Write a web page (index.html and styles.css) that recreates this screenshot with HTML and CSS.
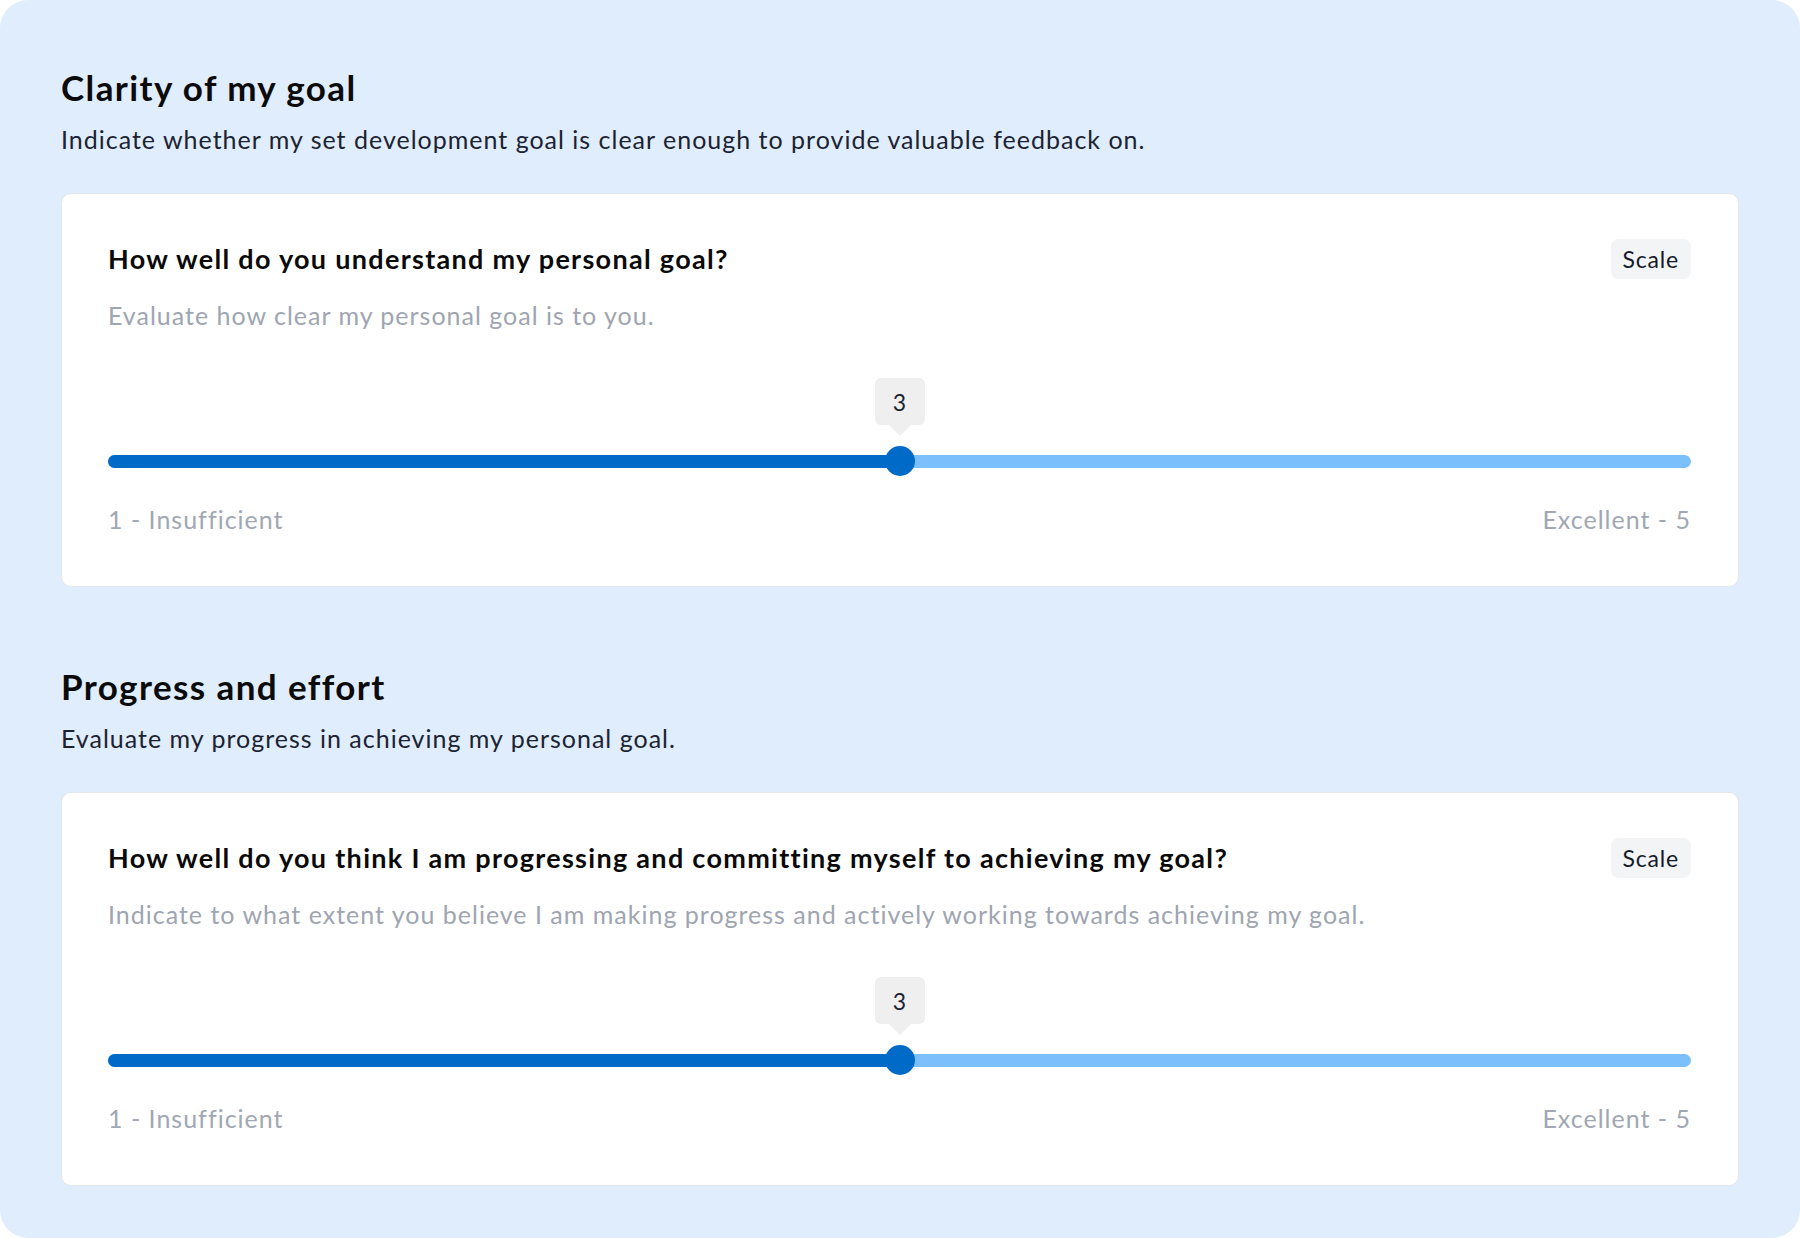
FILE: index.html
```html
<!DOCTYPE html>
<html lang="en">
<head>
<meta charset="UTF-8" />
<meta name="viewport" content="width=device-width, initial-scale=1.0" />
<title>Feedback</title>
<link rel="stylesheet" href="styles.css">
</head>
<body>

<div class="panel">

  <section class="section">
    <h2>Clarity of my goal</h2>
    <p class="section-intro">Indicate whether my set development goal is clear enough to provide valuable feedback on.</p>

    <div class="question-card">
      <div class="question-head">
        <h3>How well do you understand my personal goal?</h3>
        <span class="badge">Scale</span>
      </div>
      <p class="question-desc">Evaluate how clear my personal goal is to you.</p>

      <div class="slider">
        <div class="track">
          <div class="track-fill" style="width: 50%"></div>
        </div>
        <div class="thumb" style="left: 50%">
          <span class="tip">3</span>
        </div>
      </div>
      <div class="slider-labels">
        <span>1 - Insufficient</span>
        <span>Excellent - 5</span>
      </div>
    </div>
  </section>

  <section class="section">
    <h2>Progress and effort</h2>
    <p class="section-intro">Evaluate my progress in achieving my personal goal.</p>

    <div class="question-card">
      <div class="question-head">
        <h3>How well do you think I am progressing and committing myself to achieving my goal?</h3>
        <span class="badge">Scale</span>
      </div>
      <p class="question-desc">Indicate to what extent you believe I am making progress and actively working towards achieving my goal.</p>

      <div class="slider">
        <div class="track">
          <div class="track-fill" style="width: 50%"></div>
        </div>
        <div class="thumb" style="left: 50%">
          <span class="tip">3</span>
        </div>
      </div>
      <div class="slider-labels">
        <span>1 - Insufficient</span>
        <span>Excellent - 5</span>
      </div>
    </div>
  </section>

</div>

</body>
</html>
```

FILE: styles.css
```css
* {
  box-sizing: border-box;
}

body {
  margin: 0;
  background: #ffffff;
  font-family: Lato, "Noto Sans", sans-serif;
}

.panel {
  width: 1800px;
  height: 1238px;
  background: #e0edfc;
  border-radius: 28px;
  padding: 66px 61px 53px;
}

.section + .section {
  margin-top: 78px;
}

h2 {
  margin: 0;
  font-size: 35px;
  line-height: 42px;
  font-weight: 700;
  letter-spacing: 1.4px;
  color: #0b0b0c;
}

.section-intro {
  margin: 15px 0 0;
  font-size: 25px;
  line-height: 32px;
  letter-spacing: 1px;
  color: #1b2333;
}

.question-card {
  margin-top: 38px;
  background: #fff;
  border: 1px solid #e3e6ea;
  border-radius: 10px;
  padding: 45px 47px 51px 46px;
}

.question-head {
  display: flex;
  justify-content: space-between;
  align-items: center;
}

h3 {
  margin: 0;
  font-size: 27px;
  line-height: 34px;
  font-weight: 700;
  letter-spacing: 1.3px;
  color: #0a0a0a;
}

.badge {
  background: #f2f4f6;
  border-radius: 8px;
  height: 40px;
  padding: 0 12px;
  display: flex;
  align-items: center;
  font-size: 23px;
  letter-spacing: 0.8px;
  color: #141b2b;
}

.question-desc {
  margin: 20px 0 0;
  font-size: 25px;
  line-height: 32px;
  letter-spacing: 1px;
  color: #9ea5b1;
}

/* slider */
.slider {
  position: relative;
  margin-top: 115px;
  height: 30px;
  display: flex;
  align-items: center;
}

.track {
  width: 100%;
  height: 13px;
  border-radius: 7px;
  background: #7bc0fc;
  overflow: hidden;
}

.track-fill {
  height: 100%;
  background: #006ac8;
}

.thumb {
  position: absolute;
  top: 0;
  width: 30px;
  height: 30px;
  margin-left: -15px;
  border-radius: 50%;
  background: #006ac8;
}

.tip {
  position: absolute;
  bottom: 51px;
  left: 50%;
  transform: translateX(-50%);
  width: 50px;
  height: 47px;
  background: #efefef;
  border-radius: 6px;
  display: flex;
  align-items: center;
  justify-content: center;
  font-size: 23px;
  color: #1b2333;
}

.tip::after {
  content: "";
  position: absolute;
  top: 100%;
  left: 50%;
  margin-left: -11px;
  border-left: 11px solid transparent;
  border-right: 11px solid transparent;
  border-top: 11px solid #efefef;
}

.slider-labels {
  margin-top: 27px;
  display: flex;
  justify-content: space-between;
  font-size: 25px;
  line-height: 32px;
  letter-spacing: 1px;
  color: #a1a7b3;
}
```
